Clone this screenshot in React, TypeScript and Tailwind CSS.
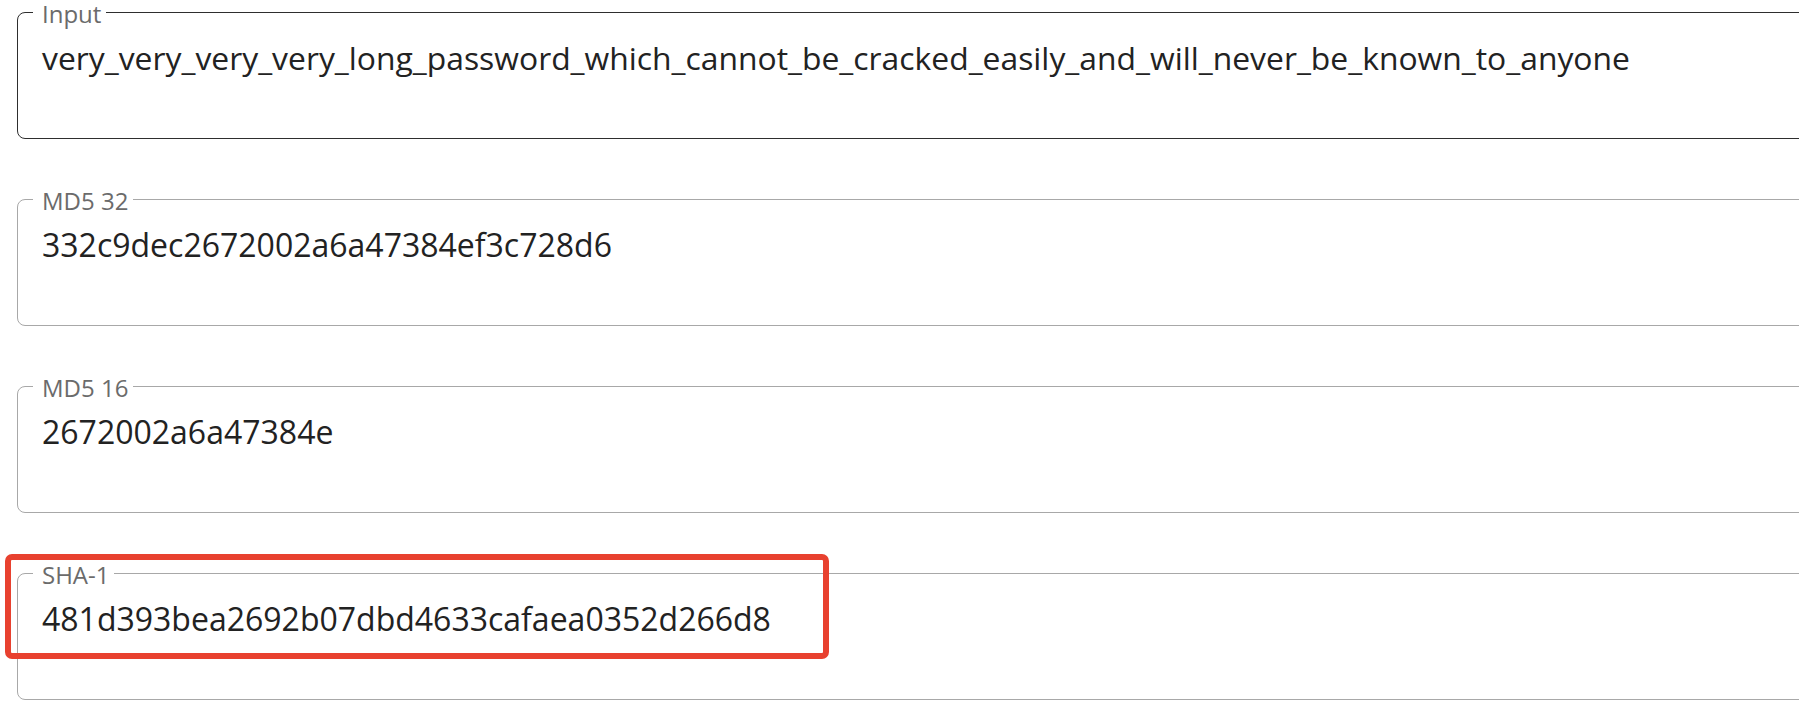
import React from 'react';

type Field = {
  label: string;
  value: string;
  active?: boolean;
};

const fields: Field[] = [
  {
    label: 'Input',
    value:
      'very_very_very_very_long_password_which_cannot_be_cracked_easily_and_will_never_be_known_to_anyone',
    active: true,
  },
  { label: 'MD5 32', value: '332c9dec2672002a6a47384ef3c728d6' },
  { label: 'MD5 16', value: '2672002a6a47384e' },
  { label: 'SHA-1', value: '481d393bea2692b07dbd4633cafaea0352d266d8' },
];

function HashField({ field }: { field: Field }) {
  return (
    <fieldset
      className={
        'm-0 h-[139px] w-[calc(100%+40px)] rounded-[8px] border px-0 pb-0 pt-0 ' +
        (field.active ? 'border-[#2e2e2e]' : 'border-[#a8a8a8]')
      }
    >
      <legend className="ml-[15px] pl-[9px] pr-[5px] pt-[4px] text-[24px] leading-[20px] text-[#6b6b6b]">
        {field.label}
      </legend>
      <div
        className={
          'whitespace-nowrap pl-[24px] pt-[14px] leading-[40px] text-[#222222] ' +
          (field.active ? 'text-[31.85px]' : 'text-[32px]')
        }
      >
        {field.value}
      </div>
    </fieldset>
  );
}

export default function App() {
  return (
    <div
      className="relative h-[726px] w-full overflow-hidden bg-white"
      style={{ fontFamily: '"Open Sans", "Noto Sans", sans-serif' }}
    >
      <div className="flex flex-col gap-[48px] pl-[17px]">
        {fields.map((f) => (
          <HashField key={f.label} field={f} />
        ))}
      </div>

      {/* highlight around the SHA-1 value */}
      <div className="pointer-events-none absolute left-[5px] top-[554px] h-[105px] w-[824px] rounded-[7px] border-[6px] border-[#e8412f]" />
    </div>
  );
}
